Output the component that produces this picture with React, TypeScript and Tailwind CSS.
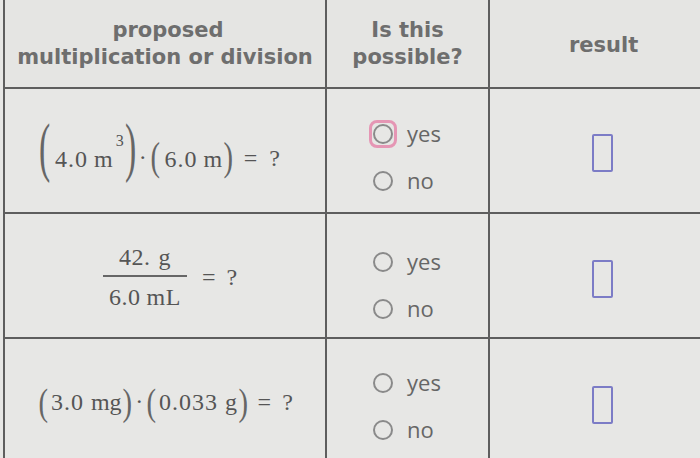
import React from "react";

const serif = { fontFamily: '"Liberation Serif", "Times New Roman", serif' };

function Radio({ label, focused }: { label: string; focused?: boolean }) {
  return (
    <div className="flex items-center h-[26px]">
      <div
        className={
          focused
            ? "w-[28px] h-[28px] -ml-[4px] mr-[-4px] rounded-[8px] border-[3px] border-[#e596b4] flex items-center justify-center"
            : "w-[20px] h-[20px] flex items-center justify-center"
        }
      >
        <div className="w-[20px] h-[20px] rounded-full border-[2px] border-[#8a8a8a] shrink-0" />
      </div>
      <span className="ml-[14px] text-[22px] leading-none text-[#666] pb-[3px]" style={{ fontFamily: '"Open Sans", sans-serif' }}>
        {label}
      </span>
    </div>
  );
}

function RadioCell({ first, topPad }: { first?: boolean; topPad: string }) {
  return (
    <div className={`border-r-2 border-b-2 border-[#5e5e5e] pl-[46px] flex flex-col gap-[21px] ${topPad}`}>
      <Radio label="yes" focused={first} />
      <Radio label="no" />
    </div>
  );
}

function ResultCell({ pt }: { pt: string }) {
  return (
    <div className={`border-b-2 border-[#5e5e5e] pl-[102px] ${pt}`}>
      <div className="w-[21px] h-[38px] border-[2px] border-[#7c7cc6] rounded-[2px]" />
    </div>
  );
}

export default function App() {
  return (
    <div className="w-[700px] h-[458px] overflow-hidden bg-[#e7e7e5]">
      <div className="ml-[3px] w-[740px] border-l-2 border-[#5e5e5e] grid grid-cols-[322px_163px_1fr] grid-rows-[89px_125px_125px_125px] text-[#6e6e6e]">
        {/* header */}
        <div
          className="border-r-2 border-b-2 border-[#5e5e5e] flex flex-col items-center justify-center text-[21px] font-bold leading-[27px] pt-[1px] bg-[#e5e5e3]"
          style={{ fontFamily: '"DejaVu Sans", Verdana, sans-serif' }}
        >
          <span className="ml-[6px]">proposed</span>
          <span>multiplication or division</span>
        </div>
        <div
          className="border-r-2 border-b-2 border-[#5e5e5e] flex flex-col items-center justify-center text-[21px] font-bold leading-[27px] pt-[1px] bg-[#e5e5e3]"
          style={{ fontFamily: '"DejaVu Sans", Verdana, sans-serif' }}
        >
          <span>Is this</span>
          <span>possible?</span>
        </div>
        <div
          className="border-b-2 border-[#5e5e5e] pl-[79px] flex items-center text-[21px] font-bold pt-[4px] bg-[#e5e5e3]"
          style={{ fontFamily: '"DejaVu Sans", Verdana, sans-serif' }}
        >
          <span>result</span>
        </div>

        {/* row 1 */}
        <div className="border-r-2 border-b-2 border-[#5e5e5e] flex items-center justify-center text-[#555] text-[24px] pt-[2px] pr-[10px]" style={serif}>
          <span className="inline-block scale-y-[2.4] scale-x-[1.25] text-[27px] text-[#666] mr-[6px] -mt-[6px]">(</span>
          <span className="tracking-[1px] mt-[14px]">4.0</span>
          <span className="ml-[6px] mt-[14px]">m</span>
          <span className="text-[16px] -mt-[22px] ml-[3px]">3</span>
          <span className="inline-block scale-y-[2.4] scale-x-[1.25] text-[27px] text-[#666] ml-[2px] -mt-[6px]">)</span>
          <span className="mx-[4px] mt-[10px]">·</span>
          <span className="inline-block scale-y-[1.5] scale-x-[1.1] text-[26px] text-[#666] mr-[5px] mt-[12px]">(</span>
          <span className="tracking-[1px] mt-[14px]">6.0</span>
          <span className="ml-[6px] mt-[14px]">m</span>
          <span className="inline-block scale-y-[1.5] scale-x-[1.1] text-[26px] text-[#666] ml-[2px] mt-[12px]">)</span>
          <span className="ml-[11px] mt-[12px]">=</span>
          <span className="ml-[12px] mt-[12px]">?</span>
        </div>
        <RadioCell first topPad="pt-[32px]" />
        <ResultCell pt="pt-[45px]" />

        {/* row 2 */}
        <div className="border-r-2 border-b-2 border-[#5e5e5e] flex items-center justify-center text-[#555] text-[24px] pt-[2px] pl-[10px]" style={serif}>
          <div className="flex flex-col items-center">
            <span className="tracking-[0.5px] px-[12px] pb-[6px] leading-[24px]">
              42.<span className="ml-[8px]">g</span>
            </span>
            <div className="w-[84px] h-[2px] bg-[#666]" />
            <span className="tracking-[0.5px] pt-[8px] leading-[24px]">
              6.0<span className="ml-[6px]">mL</span>
            </span>
          </div>
          <span className="ml-[15px]">=</span>
          <span className="ml-[11px]">?</span>
        </div>
        <RadioCell topPad="pt-[35px]" />
        <ResultCell pt="pt-[46px]" />

        {/* row 3 */}
        <div className="border-r-2 border-b-2 border-[#5e5e5e] flex items-center justify-center text-[#555] text-[24px] pt-[3px] pl-[2px]" style={serif}>
          <span className="inline-block scale-y-[1.45] scale-x-[1.1] text-[26px] text-[#666] mr-[3px]">(</span>
          <span className="tracking-[1px]">3.0</span>
          <span className="ml-[7px]">mg</span>
          <span className="inline-block scale-y-[1.45] scale-x-[1.1] text-[26px] text-[#666] ml-[1px]">)</span>
          <span className="mx-[4px] -mt-[2px]">·</span>
          <span className="inline-block scale-y-[1.45] scale-x-[1.1] text-[26px] text-[#666] mr-[3px]">(</span>
          <span className="tracking-[1px]">0.033</span>
          <span className="ml-[7px]">g</span>
          <span className="inline-block scale-y-[1.45] scale-x-[1.1] text-[26px] text-[#666] ml-[2px]">)</span>
          <span className="ml-[10px]">=</span>
          <span className="ml-[11px]">?</span>
        </div>
        <RadioCell topPad="pt-[31px]" />
        <ResultCell pt="pt-[47px]" />
      </div>
    </div>
  );
}
